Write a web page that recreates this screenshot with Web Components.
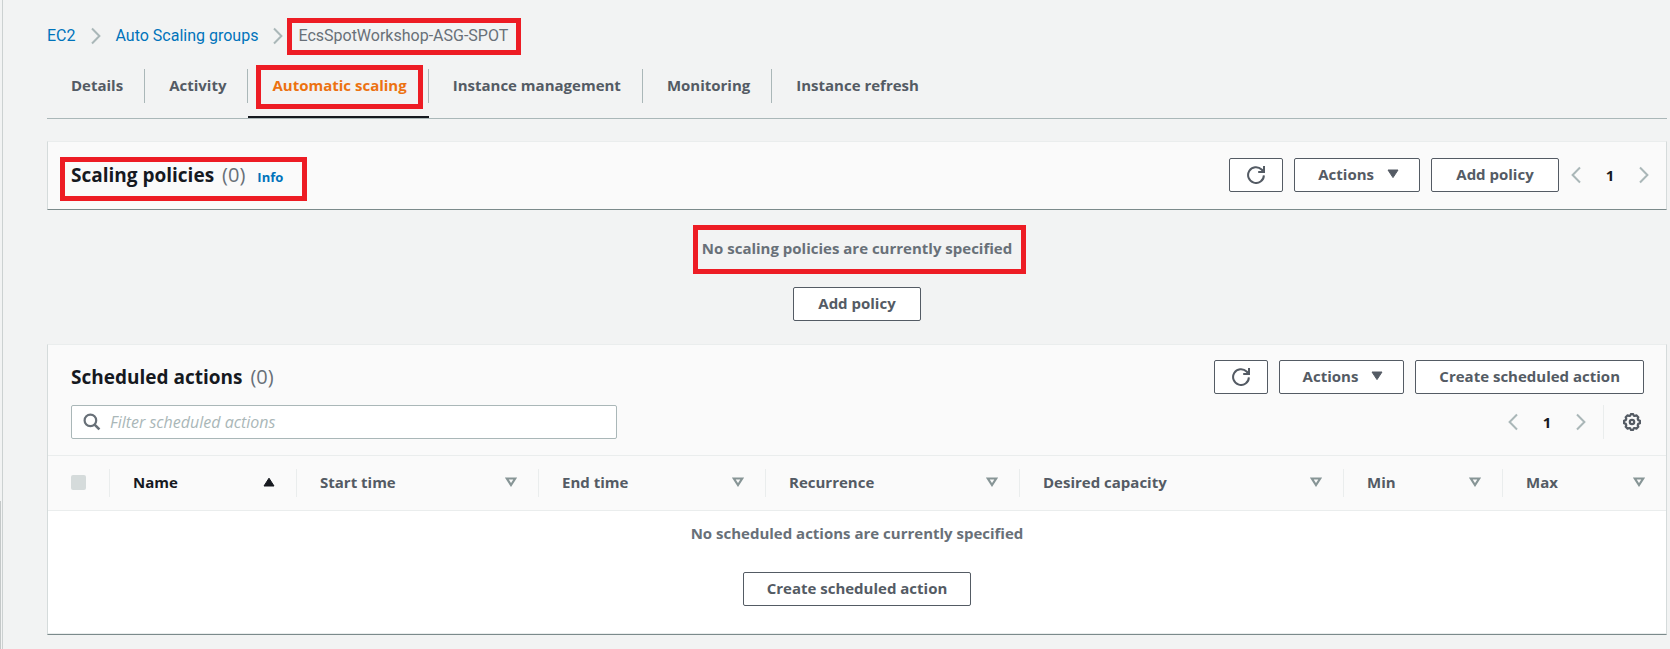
<!DOCTYPE html>
<html lang="en">
<head>
<meta charset="utf-8">
<title>Auto Scaling groups | EC2</title>
<style>
  html { background: #f2f3f3; }
  body {
    margin: 0;
    font: 15px/24px "Open Sans", "Noto Sans", sans-serif;
    color: #545b64;
  }
</style>
</head>
<body>
<asg-page></asg-page>

<script>
const define = (name, markup, setup) => {
  const template = document.createElement('template');
  template.innerHTML = '<style>*,*::before,*::after{box-sizing:border-box}:host([hidden]){display:none}</style>' + markup;
  customElements.define(name, class extends HTMLElement {
    constructor() {
      super();
      this.attachShadow({ mode: 'open' }).append(template.content.cloneNode(true));
    }
    connectedCallback() {
      if (setup) setup(this, this.shadowRoot);
    }
  });
};

const icons = {
  refresh: '<svg width="18" height="18" viewBox="0 0 18 18" fill="none" stroke="currentColor" stroke-width="2"><path d="M16.900 9.400A7.900 7.900 0 1 1 14.600 3.500L16.500 5.400"/><path d="M17 0v6h-5.800"/><path d="M13.500 5.600L16.500 2.800V5.600z" fill="currentColor" stroke="none"/></svg>',
  caret: '<svg width="12" height="10" viewBox="0 0 12 10"><path d="M1 1h10L6 8.6z" fill="currentColor" stroke="currentColor" stroke-linejoin="round"/></svg>',
  asc: '<svg width="12" height="10" viewBox="0 0 12 10"><path d="M1 9h10L6 1.2z" fill="currentColor" stroke="currentColor" stroke-linejoin="round"/></svg>',
  sort: '<svg width="12" height="10" viewBox="0 0 12 10"><path d="M1.8 1.5h8.4L6 8z" fill="none" stroke="currentColor" stroke-width="2.200"/></svg>',
  prev: '<svg width="10" height="18" viewBox="0 0 10 18"><path d="M9 1.5L1.6 9 9 16.5" fill="none" stroke="currentColor" stroke-width="2"/></svg>',
  next: '<svg width="10" height="18" viewBox="0 0 10 18"><path d="M1 1.5L8.4 9 1 16.5" fill="none" stroke="currentColor" stroke-width="2"/></svg>',
  search: '<svg width="18" height="18" viewBox="0 0 18 18" fill="none" stroke="currentColor" stroke-width="2.200"><circle cx="7.4" cy="7.4" r="5.8"/><path d="M11.600 11.600l4.800 4.800" stroke-width="2.600"/></svg>',
  gear: '<svg width="18" height="18" viewBox="0 0 18 18" fill="none" stroke="currentColor" stroke-width="2.200" stroke-linejoin="round"><circle cx="9" cy="9" r="2.2"/><path d="M7.3 2.6L8 1h2l.7 1.6 1.1.4 1.6-.6 1.9 1.9-.6 1.6.5 1.2 1.8.7v2.4l-1.8.7-.5 1.2.6 1.6-1.9 1.9-1.6-.6-1.1.4L10 17H8l-.7-1.6-1.1-.4-1.6.6-1.9-1.9.6-1.6-.5-1.2L1 10.200V7.800l1.800-.7.5-1.200-.6-1.600 1.900-1.900 1.600.6z"/></svg>'
};

define('ui-icon', `
  <style>:host{display:inline-flex;flex:none} svg{display:block}</style><span></span>`,
  (el, root) => { root.querySelector('span').innerHTML = icons[el.getAttribute('name')]; });

/* Red outline drawn around whatever is slotted in. */
define('red-mark', `
  <style>
    :host{display:inline-block;position:relative}
    :host::after{content:"";position:absolute;inset:var(--mark-inset,-5px);border:5px solid #ed1c24;pointer-events:none}
  </style><slot></slot>`);

define('ui-button', `
  <style>
    :host{display:inline-flex}
    button{display:flex;align-items:center;justify-content:center;gap:13px;min-width:128px;height:34px;padding:0 23px 2px;border:1px solid #545b64;border-radius:2px;background:#fff;color:#545b64;font:inherit;font-weight:700;cursor:pointer;white-space:nowrap}
    :host([icon]) button{min-width:0;padding:0 17px}
    :host([menu]) button{min-width:0;padding:0 20px 2px 23px}
  </style><button type="button"><slot></slot></button>`,
  (el, root) => {
    const label = el.getAttribute('label');
    if (label) root.querySelector('button').setAttribute('aria-label', label);
  });

define('ui-pagination', `
  <style>
    :host{display:flex;align-items:center;gap:25px}
    button{padding:0;border:0;background:none;font:inherit;display:flex;color:#aab7b8}
    .page{color:#16191f;font-weight:700;font-size:15px;width:8px;justify-content:center;padding-bottom:1px}
  </style>
  <button type="button" aria-label="Previous page" disabled><ui-icon name="prev"></ui-icon></button>
  <button type="button" class="page" aria-current="page">1</button>
  <button type="button" aria-label="Next page" disabled><ui-icon name="next"></ui-icon></button>`);

define('ui-breadcrumbs', `
  <style>
    :host{display:block;font:16px/24px Roboto,"Open Sans",sans-serif}
    nav{display:flex;align-items:center;gap:15px}
    a{color:#0073bb;text-decoration:none}
    ui-icon{color:#aab7b8}
    red-mark{color:#687078;--mark-inset:-6px -13px -7px -11px}
  </style>
  <nav aria-label="Breadcrumbs">
    <a href="#ec2">EC2</a><ui-icon name="next"></ui-icon>
    <a href="#groups">Auto Scaling groups</a><ui-icon name="next"></ui-icon>
    <red-mark>EcsSpotWorkshop-ASG-SPOT</red-mark>
  </nav>`);

define('ui-tabs', `
  <style>
    :host{display:block}
    nav{display:flex;border-bottom:1px solid #aab7b8}
    a{padding-bottom:13px;border-bottom:2px solid transparent;color:#545b64;font-weight:700;text-decoration:none;white-space:nowrap}
    a span{display:block;height:34px;padding:0 21px 0 24px;line-height:32px;border-right:1px solid #aab7b8}
    a:last-child span{border-right:0}
    a[aria-current]{color:#ec7211;border-bottom-color:#16191f}
    red-mark{--mark-inset:-4px -16px -8px -16px}
  </style>
  <nav aria-label="Group sections">
    <a href="#details"><span>Details</span></a>
    <a href="#activity"><span>Activity</span></a>
    <a href="#scaling" aria-current="page"><span><red-mark>Automatic scaling</red-mark></span></a>
    <a href="#instances"><span>Instance management</span></a>
    <a href="#monitoring"><span>Monitoring</span></a>
    <a href="#refresh"><span>Instance refresh</span></a>
  </nav>`);

define('ui-panel', `
  <style>
    :host{display:block;border:1px solid #d5dbdb;border-top-color:#eaeded;border-bottom-color:#7b8a8b;background:#fafafa}
  </style><slot></slot>`);

define('ui-heading', `
  <style>
    :host{display:flex;align-items:baseline;gap:8px;line-height:24px}
    h2{margin:0;font-size:19px;line-height:24px;font-weight:700;color:#16191f}
    .count{font-size:20px;color:#687078}
  </style><h2><slot></slot></h2><span class="count">(0)</span><slot name="info"></slot>`);

define('ui-empty', `
  <style>
    :host{display:flex;flex-direction:column;align-items:center;gap:27px;color:#687078;font-weight:700}
  </style><slot></slot>`);

define('scaling-policies', `
  <style>
    :host{display:block}
    header{display:flex;align-items:center;justify-content:space-between;padding:16px 17px 17px 23px}
    .tools{display:flex;gap:11px}
    .tools ui-pagination{margin-left:1px}
    a{color:#0073bb;font-size:13px;line-height:20px;font-weight:700;text-decoration:none;margin-left:4px}
    .title{--mark-inset:-6px -24px -14px -11px}
    ui-empty{padding:26px 0 1px}
    .none{--mark-inset:-11px -14px -14px -9px}
  </style>
  <ui-panel>
    <header>
      <red-mark class="title"><ui-heading>Scaling policies<a slot="info" href="#info">Info</a></ui-heading></red-mark>
      <div class="tools">
        <ui-button icon label="Refresh"><ui-icon name="refresh"></ui-icon></ui-button>
        <ui-button menu>Actions<ui-icon name="caret"></ui-icon></ui-button>
        <ui-button>Add policy</ui-button>
        <ui-pagination></ui-pagination>
      </div>
    </header>
  </ui-panel>
  <ui-empty>
    <red-mark class="none">No scaling policies are currently specified</red-mark>
    <ui-button>Add policy</ui-button>
  </ui-empty>`);

define('ui-search', `
  <style>
    :host{display:flex}
    label{display:flex;align-items:center;gap:9px;width:100%;height:34px;padding:0 11px;border:1px solid #aab7b8;border-radius:2px;background:#fff;color:#687078}
    input{flex:1;min-width:0;padding:0;border:0;outline:0;background:none;font:inherit;font-size:16px;color:#16191f}
    input::placeholder{color:#aab7b8;font-style:italic;opacity:1}
  </style>
  <label><ui-icon name="search"></ui-icon><input type="text" aria-label="Filter scheduled actions" placeholder="Filter scheduled actions"></label>`);

define('actions-table', `
  <style>
    :host{display:block}
    table{width:100%;table-layout:fixed;border-collapse:separate;border-spacing:0}
    th{padding:13px 0;text-align:left;font-weight:700;border-top:1px solid #eaeded;border-bottom:1px solid #eaeded}
    .cell{display:flex;align-items:center;justify-content:space-between;height:28px;padding:0 21px 2px 23px;border-right:1px solid #eaeded}
    th:last-child .cell{border-right:0}
    ui-icon{color:#879596}
    .sorted,.sorted ui-icon{color:#16191f}
    input{appearance:none;width:15px;height:15px;margin:0;border-radius:2px;background:#d5dbdb}
    td{padding:10px 0 27px;background:#fff;border-bottom:1px solid #eaeded}
  </style>
  <table>
    <colgroup></colgroup>
    <thead><tr><th><div class="cell"><input type="checkbox" aria-label="Select all" disabled></div></th></tr></thead>
    <tbody><tr><td colspan="8">
      <ui-empty><span>No scheduled actions are currently specified</span><ui-button>Create scheduled action</ui-button></ui-empty>
    </td></tr></tbody>
  </table>`,
  (el, root) => {
    const columns = [['Name', 187], ['Start time', 242], ['End time', 227], ['Recurrence', 254], ['Desired capacity', 324], ['Min', 159], ['Max', 163]];
    const row = root.querySelector('thead tr');
    root.querySelector('colgroup').innerHTML = '<col style="width:62px">' + columns.map(([, w]) => `<col style="width:${w}px">`).join('');
    row.insertAdjacentHTML('beforeend', columns.map(([name], i) =>
      `<th scope="col"><div class="cell${i ? '' : ' sorted'}">${name}<ui-icon name="${i ? 'sort' : 'asc'}"></ui-icon></div></th>`).join(''));
  });

define('scheduled-actions', `
  <style>
    :host{display:block}
    header{display:flex;flex-direction:column;gap:11px;padding:15px 22px 16px 23px}
    .row{display:flex;align-items:center;justify-content:space-between}
    .tools{display:flex;gap:11px}
    ui-search{flex:0 1 546px}
    .paging{display:flex;align-items:center;gap:17px;padding-right:3px}
    .settings{display:flex;align-items:center;height:34px;padding:0 0 0 19px;border:0;border-left:1px solid #eaeded;background:none;color:#545b64}
  </style>
  <ui-panel>
    <header>
      <div class="row">
        <ui-heading>Scheduled actions</ui-heading>
        <div class="tools">
          <ui-button icon label="Refresh"><ui-icon name="refresh"></ui-icon></ui-button>
          <ui-button menu>Actions<ui-icon name="caret"></ui-icon></ui-button>
          <ui-button>Create scheduled action</ui-button>
        </div>
      </div>
      <div class="row">
        <ui-search></ui-search>
        <div class="paging">
          <ui-pagination></ui-pagination>
          <button type="button" class="settings" aria-label="Preferences"><ui-icon name="gear"></ui-icon></button>
        </div>
      </div>
    </header>
    <actions-table></actions-table>
  </ui-panel>`);

define('asg-page', `
  <style>
    :host{display:flex;min-height:100vh}
    aside{flex:none;display:flex;flex-direction:column;justify-content:flex-end;width:3px;border-right:1px solid #ccd1d1}
    aside::after{content:"";width:1px;height:148px;background:#c4c8c8}
    main{flex:1;min-width:0;display:flex;flex-direction:column;gap:22px;padding:24px 3px 0 44px}
    ui-tabs{margin-top:-1px}
  </style>
  <aside></aside>
  <main>
    <ui-breadcrumbs></ui-breadcrumbs>
    <ui-tabs></ui-tabs>
    <scaling-policies></scaling-policies>
    <scheduled-actions></scheduled-actions>
  </main>`);
</script>
</body>
</html>
